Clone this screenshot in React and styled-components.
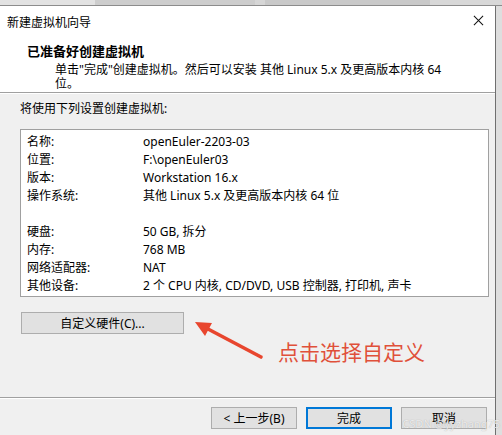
import React from "react";
import styled, { createGlobalStyle } from "styled-components";

const GlobalStyle = createGlobalStyle`
  body {
    margin: 0;
    background: #dcdcdc;
    font-family: "Noto Sans", "Noto Sans CJK SC", sans-serif;
    color: #000;
  }
`;

const summary = [
  ["名称:", "openEuler-2203-03"],
  ["位置:", "F:\\openEuler03"],
  ["版本:", "Workstation 16.x"],
  ["操作系统:", "其他 Linux 5.x 及更高版本内核 64 位"],
  ["", ""],
  ["硬盘:", "50 GB, 拆分"],
  ["内存:", "768 MB"],
  ["网络适配器:", "NAT"],
  ["其他设备:", "2 个 CPU 内核, CD/DVD, USB 控制器, 打印机, 声卡"],
];

function App() {
  return (
    <>
      <GlobalStyle />
      <Page>
        <Desktop />
        <Window>
          <TitleBar>
            <Title>新建虚拟机向导</Title>
            <CloseIcon viewBox="0 0 12 12">
              <path d="M1 1 L11 11 M11 1 L1 11" stroke="#111" strokeWidth="1.1" />
            </CloseIcon>
          </TitleBar>
          <Header>
            <HeaderTitle>已准备好创建虚拟机</HeaderTitle>
            <HeaderText>
              单击"完成"创建虚拟机。然后可以安装 其他 Linux 5.x 及更高版本内核 64
              <br />
              位。
            </HeaderText>
          </Header>
          <Body>
            <Intro>将使用下列设置创建虚拟机:</Intro>
            <SummaryBox>
              {summary.map(([label, value], i) => (
                <SummaryRow key={i}>
                  <span>{label}</span>
                  <span>{value}</span>
                </SummaryRow>
              ))}
            </SummaryBox>
            <CustomRow>
              <Button $wide>自定义硬件(C)...</Button>
              <Arrow viewBox="0 0 78 50">
                <line x1="71" y1="45" x2="18" y2="17" stroke="#e8462e" strokeWidth="3.6" strokeLinecap="round" />
                <polygon points="5,10 22,11 15,24" fill="#e8462e" />
              </Arrow>
              <Annotation>点击选择自定义</Annotation>
            </CustomRow>
          </Body>
          <Footer>
            <Button>&lt; 上一步(B)</Button>
            <Button $primary>完成</Button>
            <Button>取消</Button>
          </Footer>
        </Window>
        <Watermark>CSDN @yyzhang75</Watermark>
      </Page>
    </>
  );
}

export default App;

const Page = styled.div`
  position: relative;
  width: 502px;
  height: 435px;
  overflow: hidden;
  background: #dedede;
`;

const Desktop = styled.div`
  height: 5px;
  background: linear-gradient(
    to right,
    #e2e2e2 0 95px,
    #cdcdcd 95px 255px,
    #d6d6d6 255px 265px,
    #c9c9c9 265px 430px,
    #d8d8d8 430px
  );
  border-bottom: 1px solid #8c8c8c;
`;

const Window = styled.div`
  width: 495px;
  height: 429px;
  border-right: 1px solid #6f6f6f;
  display: flex;
  flex-direction: column;
  background: #f0f0f0;
`;

const TitleBar = styled.div`
  height: 30px;
  background: #fff;
  display: flex;
  align-items: center;
  justify-content: space-between;
  padding: 0 11px 0 7px;
`;

const Title = styled.span`
  font-size: 12px;
  margin-top: 1px;
`;

const CloseIcon = styled.svg`
  width: 11px;
  height: 11px;
  margin-top: -1px;
`;

const Header = styled.div`
  background: #fff;
  padding: 7px 0 1px 27px;
  border-bottom: 1px solid #a0a0a0;
  box-shadow: 0 1px 0 #fff;
`;

const HeaderTitle = styled.div`
  font-size: 13px;
  font-weight: bold;
  line-height: 16px;
`;

const HeaderText = styled.div`
  font-size: 12px;
  line-height: 14px;
  margin: 4px 0 0 28px;
  white-space: nowrap;
`;

const Body = styled.div`
  flex: 1;
  padding: 8px 12px 0 20px;
  display: flex;
  flex-direction: column;
`;

const Intro = styled.div`
  font-size: 12px;
  line-height: 16px;
`;

const SummaryBox = styled.div`
  margin-top: 12px;
  width: 461px;
  background: #fff;
  border: 1px solid #a0a0a0;
  padding: 2px 0 2px 6px;
`;

const SummaryRow = styled.div`
  display: grid;
  grid-template-columns: 116px 1fr;
  height: 18px;
  align-items: center;
  font-size: 12px;
  white-space: nowrap;
`;

const CustomRow = styled.div`
  display: flex;
  align-items: flex-start;
  margin: 15px 0 0 1px;
`;

const Button = styled.div`
  box-sizing: border-box;
  width: ${(p) => (p.$wide ? "163px" : "86px")};
  height: 22px;
  display: flex;
  align-items: center;
  justify-content: center;
  font-size: 12px;
  background: #e1e1e1;
  border: ${(p) => (p.$primary ? "2px solid #0078d7" : "1px solid #adadad")};
`;

const Arrow = styled.svg`
  width: 78px;
  height: 50px;
  margin-left: 6px;
  flex-shrink: 0;
`;

const Annotation = styled.div`
  margin: 26px 0 0 10px;
  font-size: 21px;
  line-height: 28px;
  color: #e0503a;
  white-space: nowrap;
`;

const Footer = styled.div`
  height: 38px;
  box-sizing: border-box;
  border-top: 1px solid #a0a0a0;
  box-shadow: inset 0 1px 0 #fff;
  display: flex;
  justify-content: flex-end;
  align-items: flex-start;
  gap: 9px;
  padding: 9px 8px 0 0;
`;

const Watermark = styled.div`
  position: absolute;
  right: 2px;
  bottom: 4px;
  font-size: 11px;
  color: rgba(255, 255, 255, 0.75);
  text-shadow: 0 0 1px rgba(120, 120, 120, 0.6);
  pointer-events: none;
`;
